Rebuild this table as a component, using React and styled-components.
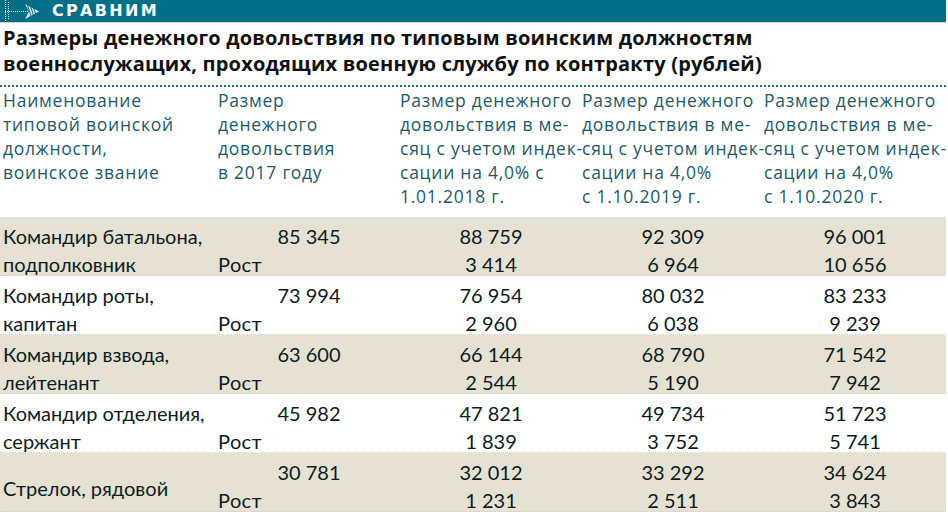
import React from "react";
import styled, { createGlobalStyle } from "styled-components";

const Global = createGlobalStyle`
  html, body { margin: 0; padding: 0; background: #ffffff; }
  body { font-family: "Lato", "Liberation Sans", sans-serif; }
`;

const Page = styled.div`
  width: 946px;
  display: flex;
  flex-direction: column;
`;

const TopBar = styled.div`
  height: 22px;
  background: #006f87;
  display: flex;
  align-items: center;
  gap: 12px;
  padding-left: 2px;
  border-bottom: 1px solid #d8d3c0;
`;

const Label = styled.span`
  font-family: "DejaVu Sans", "Liberation Sans", sans-serif;
  font-weight: bold;
  font-size: 16px;
  letter-spacing: 2.3px;
  color: #ffffff;
  line-height: 22px;
`;

const Title = styled.h1`
  margin: 0;
  padding: 2px 3px 8px;
  font-family: "Open Sans", "Liberation Sans", sans-serif;
  font-weight: 700;
  font-size: 20px;
  line-height: 26px;
  color: #111111;
  letter-spacing: 0.2px;
`;

const Grid = styled.div`
  display: grid;
  grid-template-columns: 218px 182px 182px 182px 182px;
`;

const HeadRow = styled(Grid)`
  border-top: 2px dotted #1a7088;
  padding-top: 1px;
  height: 132px;
  box-sizing: border-box;
`;

const HeadCell = styled.div`
  font-family: "Open Sans", "Liberation Sans", sans-serif;
  font-weight: 400;
  font-size: 17.5px;
  line-height: 24px;
  letter-spacing: 0.75px;
  color: #1d5a68;
  padding-left: ${(p) => (p.$first ? "3px" : "0")};
  white-space: pre;
`;

const Row = styled(Grid)`
  height: 59px;
  box-sizing: border-box;
  background: ${(p) => (p.$shade ? "#e6e2d3" : "#ffffff")};
  border-bottom: 1px dotted #d4d0c4;
  padding-top: 5px;
  font-family: "Lato", "Liberation Sans", sans-serif;
  font-size: 20px;
  line-height: 28px;
  color: #0d1c22;
`;

const NameCell = styled.div`
  padding-left: 3px;
  padding-top: ${(p) => (p.$single ? "16px" : "0")};
`;

const ValCell = styled.div`
  display: grid;
  grid-template-rows: 28px 28px;
  text-align: center;
`;

const Growth = styled.span`
  text-align: left;
  letter-spacing: 0.4px;
`;

const Arrow = () => (
  <svg width="38" height="22" viewBox="0 0 38 22">
    <g stroke="#eef4f2" strokeWidth="1" fill="none" strokeDasharray="1 1">
      <line x1="3.5" y1="0" x2="3.5" y2="22" />
      <line x1="6.5" y1="2" x2="6.5" y2="20" />
      <line x1="3" y1="11.5" x2="26" y2="11.5" />
    </g>
    <polygon points="23,4 37,11.5 23,19 27,11.5" fill="#dfeceb" />
    <g stroke="#006f87" strokeWidth="1">
      <line x1="25.5" y1="5" x2="29.5" y2="18" />
      <line x1="28.5" y1="6" x2="32" y2="17" />
      <line x1="31.5" y1="8" x2="34" y2="15" />
    </g>
  </svg>
);

const rows = [
  { n: ["Командир батальона,", "подполковник"], v: ["85 345", "88 759", "92 309", "96 001"], g: ["3 414", "6 964", "10 656"] },
  { n: ["Командир роты,", "капитан"], v: ["73 994", "76 954", "80 032", "83 233"], g: ["2 960", "6 038", "9 239"] },
  { n: ["Командир взвода,", "лейтенант"], v: ["63 600", "66 144", "68 790", "71 542"], g: ["2 544", "5 190", "7 942"] },
  { n: ["Командир отделения,", "сержант"], v: ["45 982", "47 821", "49 734", "51 723"], g: ["1 839", "3 752", "5 741"] },
  { n: ["Стрелок, рядовой"], v: ["30 781", "32 012", "33 292", "34 624"], g: ["1 231", "2 511", "3 843"] },
];

const heads = [
  "Наименование\nтиповой воинской\nдолжности,\nвоинское звание",
  "Размер\nденежного\nдовольствия\nв 2017 году",
  "Размер денежного\nдовольствия в ме-\nсяц с учетом индек-\nсации на 4,0% с\n1.01.2018 г.",
  "Размер денежного\nдовольствия в ме-\nсяц с учетом индек-\nсации на 4,0%\nс 1.10.2019 г.",
  "Размер денежного\nдовольствия в ме-\nсяц с учетом индек-\nсации на 4,0%\nс 1.10.2020 г.",
];

export default function App() {
  return (
    <Page>
      <Global />
      <TopBar>
        <Arrow />
        <Label>СРАВНИМ</Label>
      </TopBar>
      <Title>
        Размеры денежного довольствия по типовым воинским должностям
        <br />
        военнослужащих, проходящих военную службу по контракту (рублей)
      </Title>
      <HeadRow>
        {heads.map((h, i) => (
          <HeadCell key={i} $first={i === 0}>{h}</HeadCell>
        ))}
      </HeadRow>
      {rows.map((r, i) => (
        <Row key={i} $shade={i % 2 === 0}>
          <NameCell $single={r.n.length === 1}>
            {r.n.map((t, j) => (
              <div key={j}>{t}</div>
            ))}
          </NameCell>
          <ValCell>
            <span>{r.v[0]}</span>
            <Growth>Рост</Growth>
          </ValCell>
          {r.g.map((g, j) => (
            <ValCell key={j}>
              <span>{r.v[j + 1]}</span>
              <span>{g}</span>
            </ValCell>
          ))}
        </Row>
      ))}
    </Page>
  );
}
